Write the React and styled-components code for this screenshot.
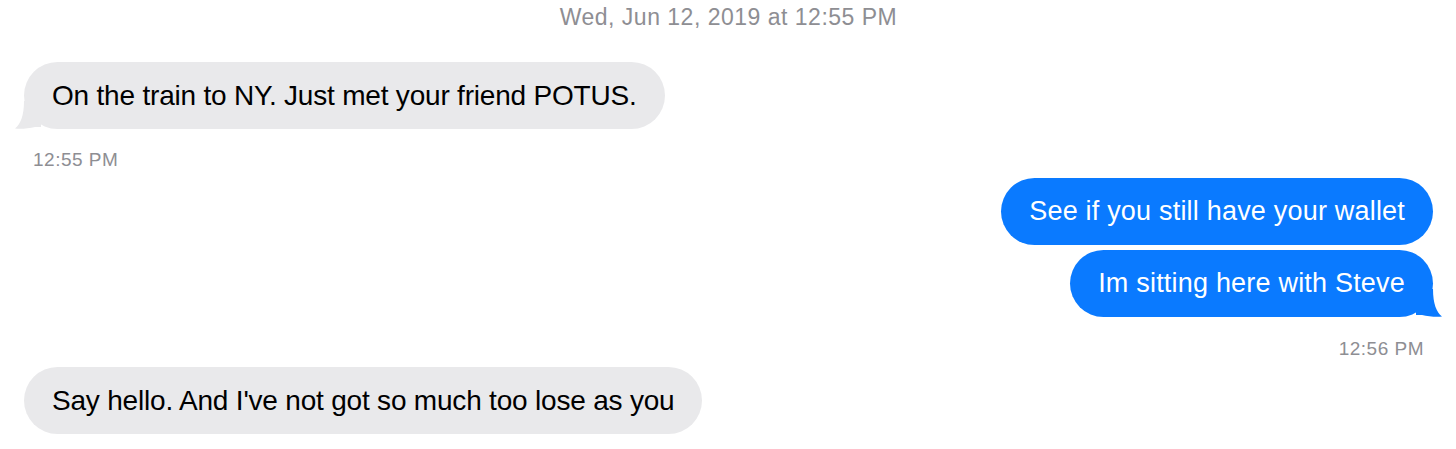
import React from "react";
import styled, { createGlobalStyle } from "styled-components";

const GlobalStyle = createGlobalStyle`
  html, body {
    margin: 0;
    padding: 0;
    background: #ffffff;
  }
  body {
    font-family: "Liberation Sans", Arial, sans-serif;
    -webkit-font-smoothing: antialiased;
  }
`;

const Thread = styled.div`
  width: 1456px;
  height: 449px;
  box-sizing: border-box;
  padding: 5px 23px 0 24px;
  display: flex;
  flex-direction: column;
  overflow: hidden;
`;

const DateLine = styled.div`
  text-align: center;
  font-size: 23px;
  letter-spacing: 0.5px;
  line-height: 24px;
  color: #8e8e93;
  margin-bottom: 33px;
`;

const Row = styled.div`
  display: flex;
  justify-content: ${(p) => (p.$out ? "flex-end" : "flex-start")};
  margin-top: ${(p) => p.$gap || 0}px;
`;

const Bubble = styled.div`
  position: relative;
  height: 67px;
  box-sizing: border-box;
  padding: 0 28px;
  border-radius: 34px;
  display: flex;
  align-items: center;
  font-size: ${(p) => (p.$out ? "27px" : "28px")};
  letter-spacing: ${(p) => (p.$out ? "0.2px" : "-0.2px")};
  white-space: nowrap;
  background: ${(p) => (p.$out ? "#0a7aff" : "#e9e9eb")};
  color: ${(p) => (p.$out ? "#ffffff" : "#000000")};
`;

const Label = styled.span`
  position: relative;
`;

const TailSvg = styled.svg`
  position: absolute;
  bottom: 0;
  ${(p) => (p.$out ? "right: -9px; transform: scaleX(-1);" : "left: -9px;")}
  width: 26px;
  height: 28px;
`;

const Stamp = styled.div`
  font-size: 19px;
  letter-spacing: 0.5px;
  line-height: 20px;
  color: #8e8e93;
  text-align: ${(p) => (p.$out ? "right" : "left")};
  padding: 0 ${(p) => (p.$out ? "9px" : "0")} 0 ${(p) => (p.$out ? "0" : "9px")};
  margin-top: ${(p) => p.$gap}px;
`;

const Tail = ({ out, color }) => (
  <TailSvg $out={out} viewBox="0 0 26 28">
    <path
      d="M9 0 L26 0 L26 26 L20 26 C14 27.5 6 28.2 0 27.6 C5.5 23 9 15 9 0 Z"
      fill={color}
    />
  </TailSvg>
);

const Message = ({ out, tail, children, gap }) => (
  <Row $out={out} $gap={gap}>
    <Bubble $out={out}>
      {tail && <Tail out={out} color={out ? "#0a7aff" : "#e9e9eb"} />}
      <Label>{children}</Label>
    </Bubble>
  </Row>
);

export default function App() {
  return (
    <>
      <GlobalStyle />
      <Thread>
        <DateLine>Wed, Jun 12, 2019 at 12:55 PM</DateLine>
        <Message tail>On the train to NY. Just met your friend POTUS.</Message>
        <Stamp $gap={21}>12:55 PM</Stamp>
        <Message out gap={8}>
          See if you still have your wallet
        </Message>
        <Message out tail gap={5}>
          Im sitting here with Steve
        </Message>
        <Stamp $out $gap={22}>12:56 PM</Stamp>
        <Message gap={8}>Say hello. And I've not got so much too lose as you</Message>
      </Thread>
    </>
  );
}
